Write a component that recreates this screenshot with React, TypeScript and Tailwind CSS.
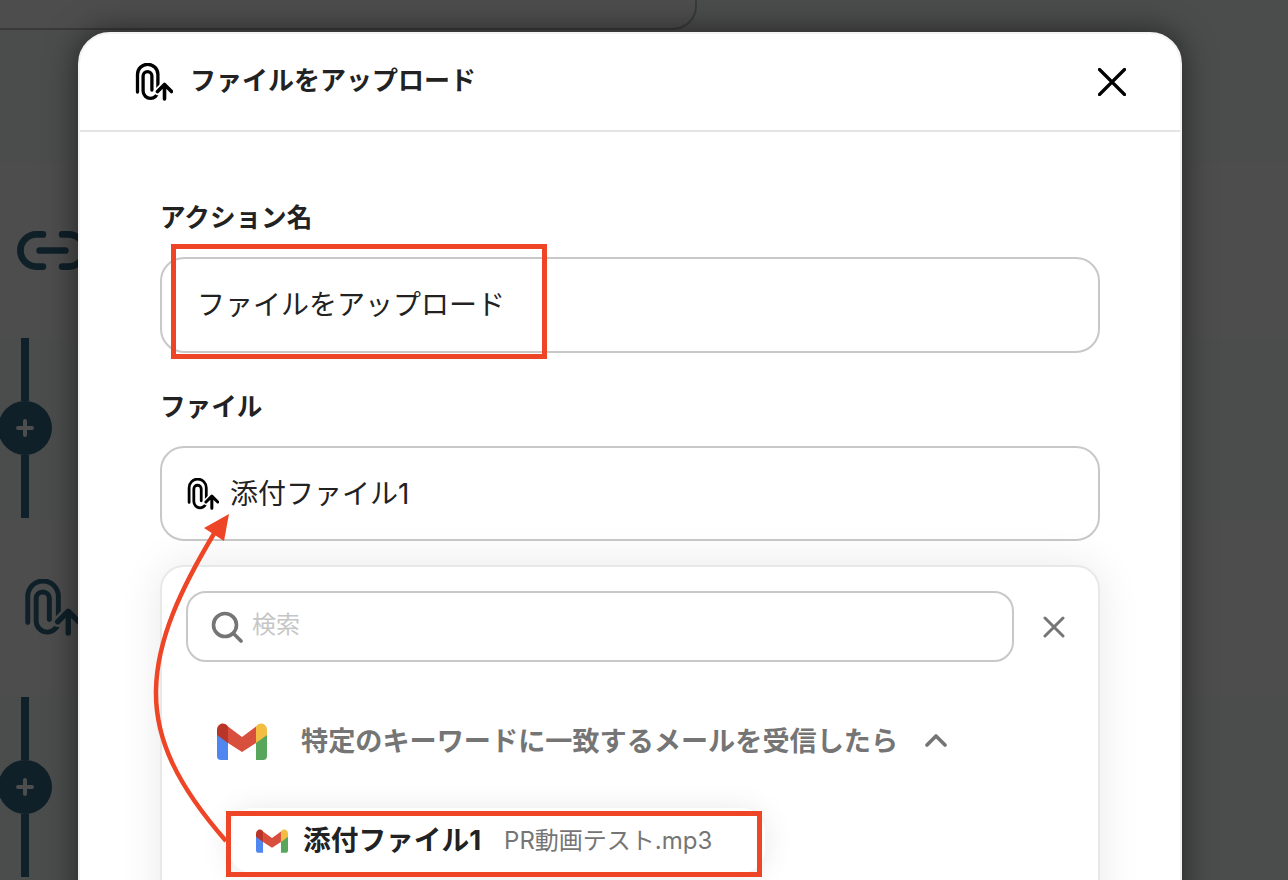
const darkIcon = '#0f2029'

const ClipUpIcon = ({ className, color, halo }: { className: string; color: string; halo: string }) => (
  <svg viewBox="0 0 38 38" fill="none" strokeLinecap="round" strokeLinejoin="round" className={className}>
    <path
      d="M2.5 29V11.5a10.2 10.2 0 0 1 20.4 0V28a7.4 7.4 0 0 1-14.8 0V13a4.4 4.4 0 0 1 8.8 0v14"
      stroke={color}
      strokeWidth="3.3"
    />
    <path d="M29.5 36V22M22.5 28.5l7-7 7 7" stroke={halo} strokeWidth="7" />
    <path d="M29.5 36V22M22.5 28.5l7-7 7 7" stroke={color} strokeWidth="3.6" />
  </svg>
)

const GmailIcon = ({ className }: { className: string }) => (
  <svg viewBox="0 0 50 37" className={className}>
    <path d="M0 11L11 19V37H4a4 4 0 0 1-4-4Z" fill="#4f86f0" />
    <path d="M50 11L39 19V37H46a4 4 0 0 0 4-4Z" fill="#57a65c" />
    <path d="M11 3.5V20L0 12V7C0 1 7-2 11 3.5Z" fill="#b93527" />
    <path d="M39 3.5V20L50 12V7C50 1 43-2 39 3.5Z" fill="#f3bd42" />
    <path d="M11 3.5L25 14 39 3.5V20L25 29 11 20Z" fill="#d94f3d" />
  </svg>
)

const Connector = () => (
  <div className="flex h-[180px] w-[50px] flex-col items-center">
    <div className="w-2 flex-1 bg-[#0f2029]" />
    <div className="flex h-[54px] w-[54px] shrink-0 items-center justify-center rounded-full bg-[#0f2029]">
      <svg viewBox="0 0 20 20" className="h-5 w-5" stroke="#4d4d4d" strokeWidth="4" strokeLinecap="round">
        <path d="M10 3v14M3 10h14" />
      </svg>
    </div>
    <div className="w-2 flex-1 bg-[#0f2029]" />
  </div>
)

const BackgroundFlow = () => (
  <div>
    <div className="h-[30px] w-[697px] overflow-hidden rounded-br-[24px] border-r-2 border-b-2 border-[#3a3a3a] bg-[#4d4d4d]">
      <p className="-mt-[26px] pl-[16px] text-[24px] leading-[30px] text-[#0f2029]">ー の機能の</p>
    </div>
    <div className="mt-[132px] flex h-[176px] items-center bg-[#4d4d4d] pl-[14px]">
      <svg viewBox="0 0 24 24" fill="none" stroke={darkIcon} strokeWidth="2.1" strokeLinecap="round" strokeLinejoin="round" className="h-[77px] w-[77px]">
        <path d="M9 17H7A5 5 0 0 1 7 7h2" />
        <path d="M15 7h2a5 5 0 1 1 0 10h-2" />
        <path d="M8 12h8" />
      </svg>
    </div>
    <Connector />
    <div className="mt-[2px] flex h-[175px] items-center bg-[#4d4d4d] pl-[24px]">
      <ClipUpIcon className="h-[57px] w-[57px]" color={darkIcon} halo="#4d4d4d" />
    </div>
    <div className="mt-[2px]">
      <Connector />
    </div>
  </div>
)

const App = () => {
  return (
    <div
      className="relative h-[880px] w-[1288px] overflow-hidden bg-[#4b4d4c] text-[#222222]"
      style={{ fontFamily: 'Inter, "Noto Sans CJK JP", sans-serif' }}
    >
      <BackgroundFlow />

      <div className="absolute top-[32px] left-[78px] h-[900px] w-[1104px] rounded-[32px] border-2 border-[#f3f3f3] bg-white shadow-[0_0_32px_rgba(0,0,0,0.55)]">
        <div className="flex h-[98px] items-center justify-between border-b-2 border-[#e4e4e4] pr-[54px] pl-[55px]">
          <div className="flex items-center gap-[17px]">
            <ClipUpIcon className="h-[38px] w-[38px]" color="#000000" halo="#ffffff" />
            <span className="-mt-[2px] text-[26px] leading-9 font-bold">ファイルをアップロード</span>
          </div>
          <svg viewBox="0 0 28 28" className="-mt-[1px] h-7 w-7" stroke="#000000" strokeWidth="3.2" strokeLinecap="round">
            <path d="M1.5 1.5l25 25M26.5 1.5l-25 25" />
          </svg>
        </div>

        <div className="pr-[80px] pl-[81px]">
          <p className="-ml-[1px] mt-[68px] text-[25.6px] leading-9 font-bold">アクション名</p>
          <div className="-ml-[1px] mt-[21px] flex h-[96px] items-center rounded-[24px] border-2 border-[#c8c8c8] pl-[35px] text-[28px]">
            ファイルをアップロード
          </div>

          <p className="-ml-[1px] mt-[36px] text-[25.6px] leading-9 font-bold">ファイル</p>
          <div className="-ml-[1px] mt-[21px] flex h-[95px] items-center gap-[11px] rounded-[24px] border-2 border-[#c8c8c8] pl-[25px] text-[28px]">
            <ClipUpIcon className="h-[32px] w-[32px]" color="#000000" halo="#ffffff" />
            <span className="mt-[1px]">添付ファイル1</span>
          </div>

          <div className="-ml-[1px] mt-[24px] h-[400px] rounded-[24px] border-2 border-[#e8e8e8] bg-white pt-[24px] pl-[24px] shadow-[0_0_44px_rgba(0,0,0,0.09)]">
            <div className="flex items-center">
              <div className="flex h-[71px] w-[828px] items-center gap-[9px] rounded-[20px] border-2 border-[#c8c8c8] pl-[23px]">
                <svg viewBox="0 0 32 32" fill="none" stroke="#757575" strokeWidth="3.6" strokeLinecap="round" className="h-8 w-8">
                  <circle cx="14" cy="14" r="11.5" />
                  <path d="M23 23l7 7" />
                </svg>
                <span className="-mt-[3px] text-[24px] text-[#c6c6c6]">検索</span>
              </div>
              <svg viewBox="0 0 22 22" className="ml-[29px] h-[22px] w-[22px]" stroke="#757575" strokeWidth="3" strokeLinecap="round">
                <path d="M2 2l18 18M20 2L2 20" />
              </svg>
            </div>

            <div className="mt-[61px] flex items-center pl-[31px]">
              <GmailIcon className="h-[37px] w-[50px]" />
              <span className="ml-[34px] text-[27.15px] leading-9 font-bold text-[#757575]">
                特定のキーワードに一致するメールを受信したら
              </span>
              <svg viewBox="0 0 22 14" fill="none" className="ml-[27px] -mt-[3px] h-[14px] w-[22px]" stroke="#757575" strokeWidth="3.6" strokeLinecap="round" strokeLinejoin="round">
                <path d="M2 12l9-9 9 9" />
              </svg>
            </div>

            <div className="mt-[48px] ml-[43px] flex h-[65px] w-[536px] items-center rounded-[24px] bg-white pl-[27px] shadow-[0_2px_30px_rgba(0,0,0,0.1)]">
              <GmailIcon className="h-[24px] w-[32px]" />
              <span className="ml-[15px] text-[27.7px] font-bold">添付ファイル1</span>
              <span className="ml-[23px] text-[24px] text-[#757575]">PR動画テスト.mp3</span>
            </div>
          </div>
        </div>
      </div>

      {/* annotations drawn on top of the screenshot */}
      <div className="absolute top-[244px] left-[171px] h-[115px] w-[376px] border-[5px] border-[#ee4527]" />
      <div className="absolute top-[811px] left-[226px] h-[66px] w-[536px] border-[5px] border-[#ee4527]" />
      <svg viewBox="0 0 1288 880" fill="none" className="absolute inset-0 h-[880px] w-[1288px]">
        <path d="M226 841C178 786 155 740 156 690C157 640 180 590 215 532" stroke="#ee4527" strokeWidth="4.5" />
        <path d="M229 514L204 528L224 541Z" fill="#ee4527" />
      </svg>
    </div>
  )
}

export default App
